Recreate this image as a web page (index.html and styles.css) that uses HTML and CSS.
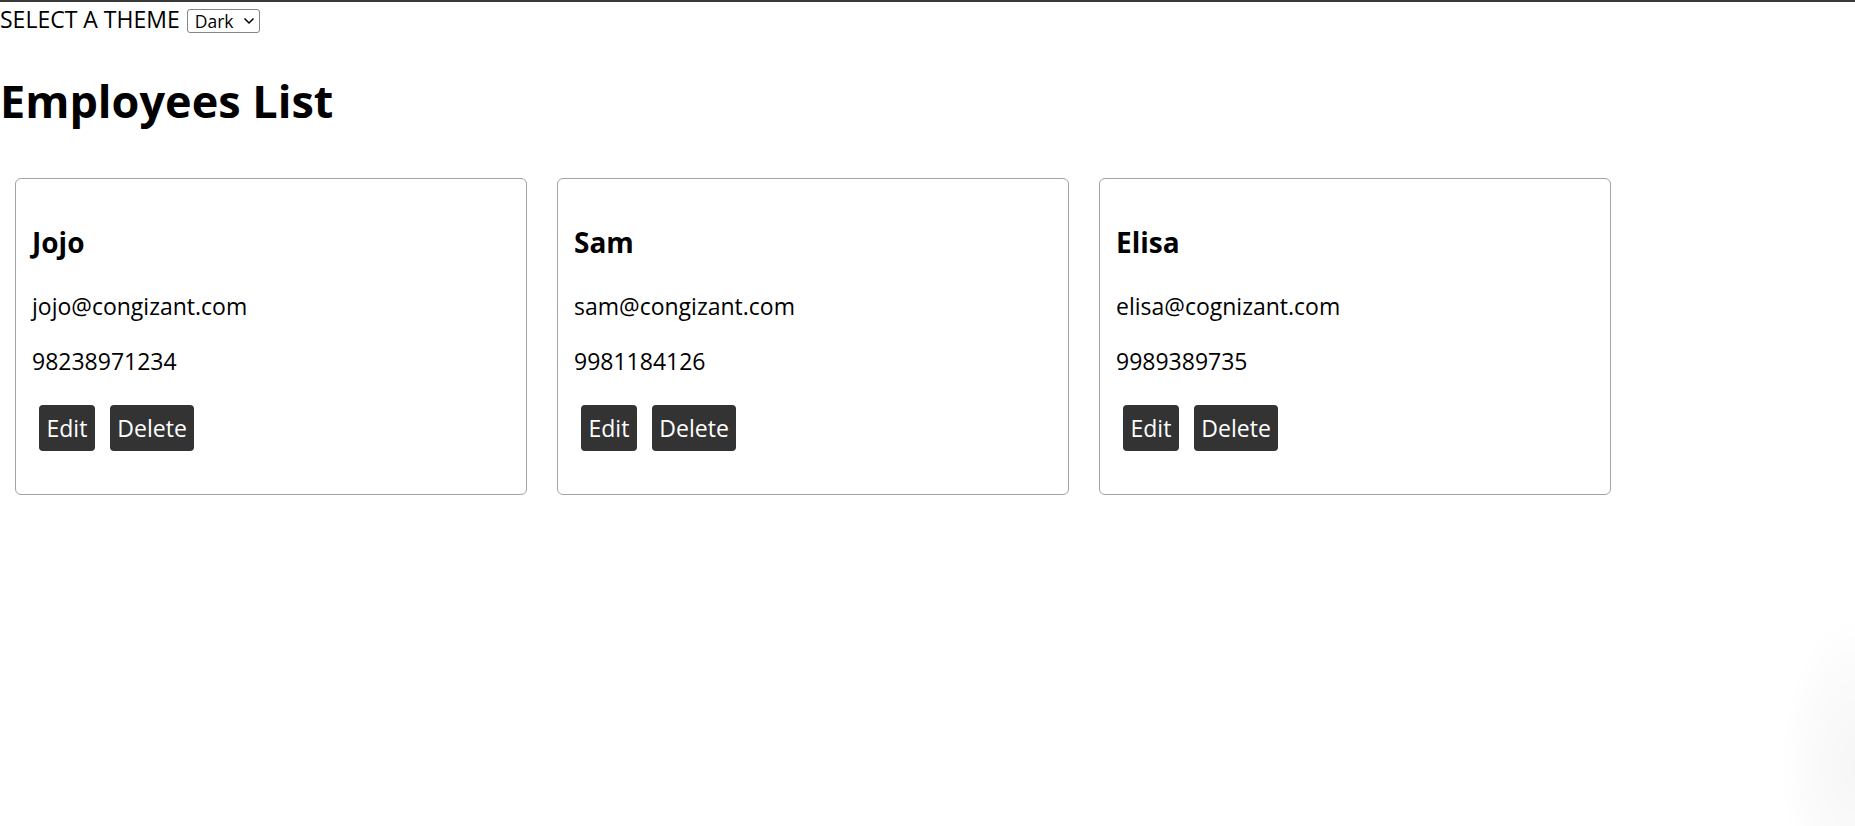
FILE: index.html
```html
<!DOCTYPE html>
<html lang="en">
<head>
<meta charset="utf-8">
<title>Employees List</title>
<link rel="stylesheet" href="styles.css">
</head>
<body>
<div class="app">
  <div class="theme-row">
    <span class="theme-label">SELECT A THEME</span>
    <span class="select-wrap">
      <select class="theme-select">
        <option>Dark</option>
        <option>Light</option>
      </select>
      <svg class="chevron" width="12" height="8" viewBox="0 0 12 8"><path d="M1.5 1.5 L6 6 L10.5 1.5" fill="none" stroke="#000" stroke-width="1.5"/></svg>
    </span>
  </div>
  <h1 class="title">Employees List</h1>
  <div class="cards">
    <div class="card">
      <h3 class="name">Jojo</h3>
      <p class="info email">jojo@congizant.com</p>
      <p class="info phone">98238971234</p>
      <div class="actions">
        <button class="btn">Edit</button>
        <button class="btn">Delete</button>
      </div>
    </div>
    <div class="card">
      <h3 class="name">Sam</h3>
      <p class="info email">sam@congizant.com</p>
      <p class="info phone">9981184126</p>
      <div class="actions">
        <button class="btn">Edit</button>
        <button class="btn">Delete</button>
      </div>
    </div>
    <div class="card">
      <h3 class="name">Elisa</h3>
      <p class="info email">elisa@cognizant.com</p>
      <p class="info phone">9989389735</p>
      <div class="actions">
        <button class="btn">Edit</button>
        <button class="btn">Delete</button>
      </div>
    </div>
  </div>
  <div class="corner-shade"></div>
</div>
</body>
</html>
```

FILE: styles.css
```css
html, body {
  margin: 0;
  padding: 0;
  background: #ffffff;
}

body {
  font-family: "Open Sans", "Noto Sans", sans-serif;
  color: #000;
  border-top: 2px solid #3a3a3a;
  min-height: 824px;
  overflow: hidden;
}

.theme-row {
  display: flex;
  align-items: flex-start;
  height: 34px;
  padding-top: 4px;
  box-sizing: border-box;
}

.theme-label {
  font-size: 23px;
  line-height: 26px;
}

.select-wrap {
  position: relative;
  display: inline-block;
  margin-left: 7px;
  margin-top: 3px;
}

.theme-select {
  -webkit-appearance: none;
  appearance: none;
  display: block;
  font-family: "Open Sans", "Noto Sans", sans-serif;
  font-size: 17.5px;
  width: 73px;
  height: 24px;
  padding: 0 0 0 7px;
  border: 1px solid #858585;
  border-radius: 3px;
  background: #fff;
  color: #000;
  line-height: 22px;
}

.chevron {
  position: absolute;
  right: 5px;
  top: 8px;
  pointer-events: none;
}

.title {
  font-size: 45px;
  font-weight: 700;
  line-height: 56px;
  margin: 37px 0 0 0;
}

.cards {
  display: flex;
  gap: 30px;
  padding-left: 15px;
  margin-top: 49px;
}

.card {
  width: 512px;
  box-sizing: border-box;
  border: 1px solid #a3a3a3;
  border-radius: 6px;
  padding: 0 16px 43px 16px;
}

.name {
  font-size: 28px;
  font-weight: 700;
  line-height: 36px;
  margin: 45px 0 0 0;
}

.info {
  font-size: 23px;
  line-height: 30px;
  margin: 0;
}

.email {
  margin-top: 31px;
}

.phone {
  margin-top: 25px;
}

.actions {
  display: flex;
  gap: 15px;
  margin: 29px 0 0 7px;
}

.btn {
  font-family: "Open Sans", "Noto Sans", sans-serif;
  font-size: 23px;
  height: 46px;
  padding: 0 7.5px;
  background: #333333;
  color: #ffffff;
  border: none;
  border-radius: 4px;
}

.corner-shade {
  position: fixed;
  right: -75px;
  bottom: -90px;
  width: 150px;
  height: 300px;
  border-radius: 50%;
  background: radial-gradient(ellipse at center, rgba(0, 0, 0, 0.035) 0%, rgba(0, 0, 0, 0.015) 45%, rgba(0, 0, 0, 0) 70%);
  pointer-events: none;
}
```
